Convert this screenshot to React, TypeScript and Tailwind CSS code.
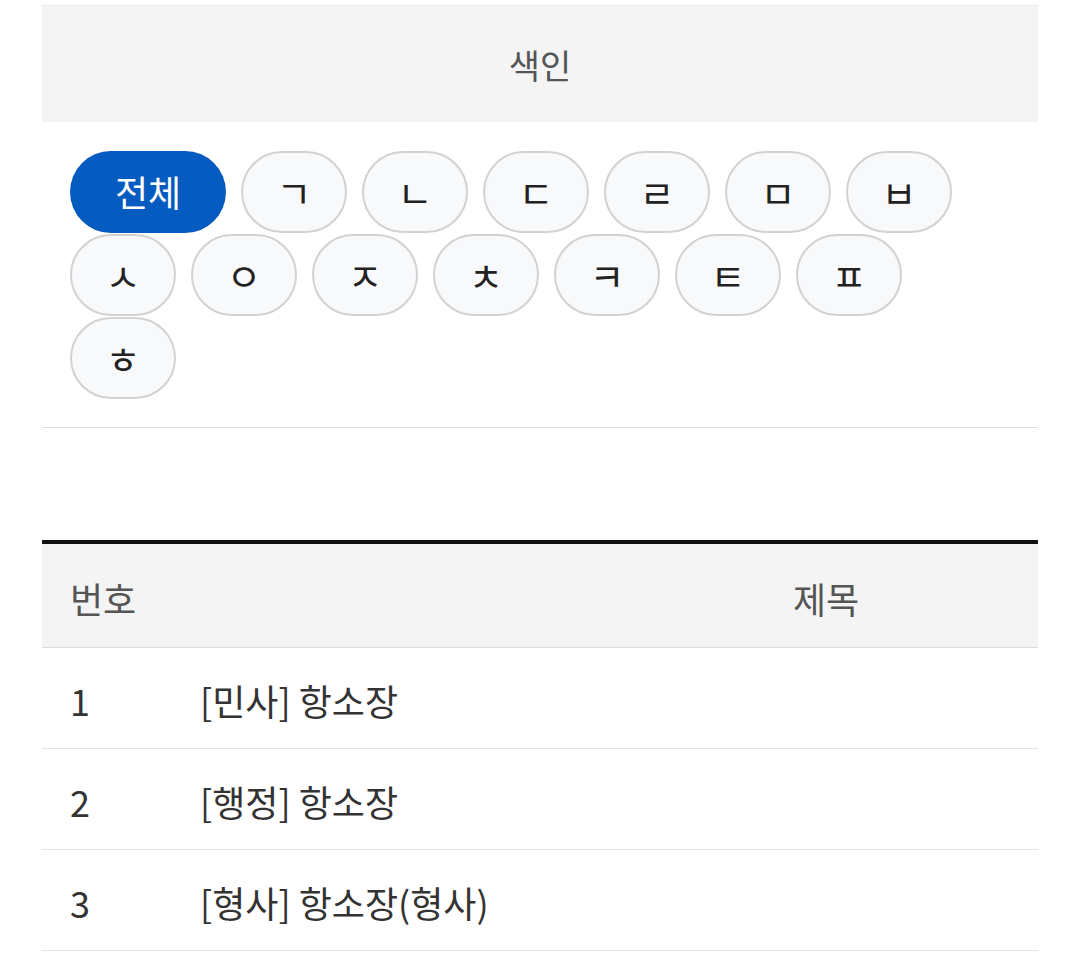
const jamo = ["ㄱ", "ㄴ", "ㄷ", "ㄹ", "ㅁ", "ㅂ", "ㅅ", "ㅇ", "ㅈ", "ㅊ", "ㅋ", "ㅌ", "ㅍ", "ㅎ"];

const rows = [
  { no: 1, title: "[민사] 항소장" },
  { no: 2, title: "[행정] 항소장" },
  { no: 3, title: "[형사] 항소장(형사)" },
];

export default function App() {
  return (
    <div className="min-h-[954px] bg-white font-['Noto_Sans_CJK_KR','Noto_Sans',sans-serif] pt-[5px]">
      <div className="mx-[42px]">
        {/* index */}
        <div className="border-t border-[#e8e8e8] bg-[#f4f4f4] h-[117px] flex items-center justify-center">
          <h2 className="text-[34px] text-[#555] font-normal leading-none pt-[2px]">색인</h2>
        </div>
        <div className="flex flex-wrap gap-x-[15px] gap-y-[1px] px-[28px] pt-[29px] pb-[28px] border-b border-[#dedede]">
          <button className="w-[156px] h-[82px] rounded-full bg-[#065bc0] text-white text-[36px] leading-none pb-[2px]">
            전체
          </button>
          {jamo.map((j) => (
            <button
              key={j}
              className="w-[106px] h-[82px] rounded-full border-2 border-[#d2d2d2] bg-[#f8f9fb] text-[#222] text-[38px] leading-none"
            >
              {j}
            </button>
          ))}
        </div>

        {/* list */}
        <div className="mt-[112px] border-t-4 border-[#111]">
          <div className="flex items-center h-[104px] bg-[#f4f4f4] border-b border-[#dcdcdc] text-[36px] text-[#555] leading-none pt-[4px]">
            <div className="pl-[28px]">번호</div>
            <div className="ml-auto w-[424px] text-center">제목</div>
          </div>
          {rows.map((r) => (
            <div key={r.no} className="flex items-center h-[101px] border-b border-[#e4e4e4] text-[36px] text-[#333] leading-none pt-[4px]">
              <div className="w-[158px] pl-[28px]">{r.no}</div>
              <div>{r.title}</div>
            </div>
          ))}
        </div>
      </div>
    </div>
  );
}
